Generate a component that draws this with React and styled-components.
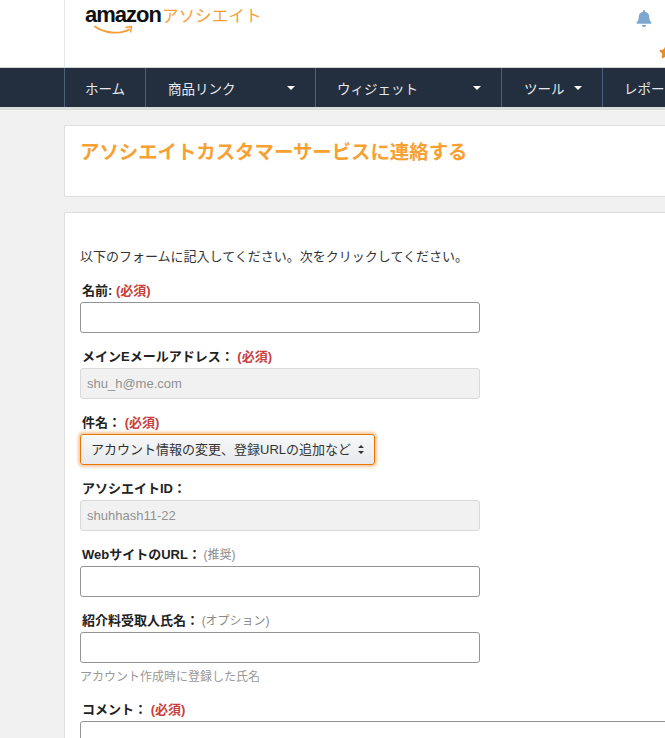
import React from 'react';
import styled, { createGlobalStyle } from 'styled-components';
import { FaBell, FaStar } from 'react-icons/fa';

const GlobalStyle = createGlobalStyle`
    html, body {
        margin: 0;
        padding: 0;
        height: 100%;
        overflow: hidden;
        background-color: #f1f1f1;
        font-family: "Liberation Sans", "Noto Sans CJK JP", sans-serif;
        color: #222;
    }
`;

const Page = styled.div`
    width: 665px;
    height: 738px;
    overflow: hidden;
`;

const Header = styled.header`
    height: 67px;
    display: flex;
    background-color: #fff;
    border-bottom: solid 1px #cfd4d9;
`;

const LogoCell = styled.div`
    margin-left: 64px;
    padding: 1px 0 0 20px;
    border-left: solid 1px #e7e7e7;
`;

const Logo = styled.div`
    position: relative;
    display: flex;
    align-items: baseline;
    height: 32px;
`;

const LogoWord = styled.span`
    font-size: 22px;
    font-weight: 700;
    letter-spacing: -1px;
    color: #111;
    line-height: 28px;
    margin-right: 1px;
`;

const LogoSuffix = styled.span`
    font-size: 16.6px;
    font-weight: 400;
    line-height: 28px;
    color: #f79f3c;
`;

const Smile = styled.svg`
    position: absolute;
    left: 9px;
    top: 24px;
`;

const Actions = styled.div`
    margin-left: auto;
    width: 29px;
    overflow: hidden;
    display: flex;
    flex-direction: column;
    padding-top: 10px;
`;

const Bell = styled(FaBell)`
    width: 16px;
    height: 17px;
    color: #7fa8d1;
`;

const Star = styled(FaStar)`
    flex: none;
    width: 14px;
    height: 14px;
    margin: 18px 0 0 23px;
    color: #e98a2b;
`;

const Nav = styled.nav`
    height: 39px;
    padding-left: 64px;
    display: flex;
    background-color: #232f3e;
    border-bottom: solid 3px #dcdcdc;
`;

const NavItem = styled.a`
    flex: none;
    box-sizing: border-box;
    width: ${(props) => props.$width}px;
    padding: 0 20px 0 ${(props) => props.$left}px;
    display: flex;
    align-items: center;
    justify-content: space-between;
    border-left: solid 1px #4d6079;
    font-size: 13.5px;
    color: #e6e8ea;
    white-space: nowrap;
`;

const Caret = styled.span`
    width: 0;
    height: 0;
    border-left: solid 4px transparent;
    border-right: solid 4px transparent;
    border-top: solid 4px #fff;
`;

const Card = styled.section`
    box-sizing: border-box;
    width: 640px;
    margin-left: 64px;
    background-color: #fff;
    border: solid 1px #dedede;
    border-right: none;
    border-radius: 2px 0 0 2px;
`;

const TitleCard = styled(Card)`
    height: 72px;
    margin-top: 15px;
    margin-bottom: 15px;
    padding: 12px 15px;
`;

const Title = styled.h1`
    margin: 0;
    font-size: 19.4px;
    font-weight: 700;
    line-height: 28px;
    color: #f7a133;
    white-space: nowrap;
`;

const FormCard = styled(Card)`
    padding: 35px 15px 0;
    height: 600px;
`;

const Intro = styled.p`
    margin: 0 0 15px;
    font-size: 13px;
    line-height: 18px;
    color: #333;
`;

const Field = styled.div`
    margin-bottom: 14px;
`;

const Label = styled.label`
    display: block;
    padding-left: 2px;
    height: 18px;
    margin-bottom: 3px;
    font-size: 13px;
    font-weight: 700;
    line-height: 20px;
    color: #222;
`;

const Required = styled.span`
    color: #c9403c;
`;

const Optional = styled.span`
    margin-left: -1px;
    font-size: 12px;
    font-weight: 400;
    color: #8a8a8a;
`;

const Input = styled.input`
    display: block;
    box-sizing: border-box;
    width: ${(props) => props.$width || 400}px;
    height: 31px;
    padding: 0 6px;
    font-family: inherit;
    font-size: 13px;
    color: #222;
    background-color: #fff;
    border: solid 1px #949494;
    border-radius: 3px;
    outline: none;

    &:disabled {
        background-color: #f1f1f1;
        border-color: #dadada;
        color: #919191;
        -webkit-text-fill-color: #919191;
        opacity: 1;
    }
`;

const SelectBox = styled.div`
    position: relative;
    width: 295px;
    height: 31px;
`;

const Select = styled.select`
    appearance: none;
    box-sizing: border-box;
    width: 100%;
    height: 100%;
    padding: 0 0 0 10px;
    font-family: inherit;
    font-size: 13px;
    color: #333;
    background: linear-gradient(to bottom, #f7f8fa, #e7e9ec);
    border: solid 1px #e77600;
    border-radius: 3px;
    box-shadow: 0 0 3px 2px rgba(228, 121, 17, 0.4);
    outline: none;
`;

const SelectArrows = styled.svg`
    position: absolute;
    right: 11px;
    top: 11px;
    pointer-events: none;
`;

const Hint = styled.div`
    margin-top: 6px;
    height: 17px;
    font-size: 12px;
    line-height: 17px;
    color: #999;
`;

const NAV_ITEMS = [
    { label: 'ホーム', width: 81, left: 20 },
    { label: '商品リンク', width: 170, left: 22, caret: true },
    { label: 'ウィジェット', width: 186, left: 21, caret: true },
    { label: 'ツール', width: 101, left: 22, caret: true },
    { label: 'レポート', width: 120, left: 21 },
];

function App() {
    return (
        <Page>
            <GlobalStyle />
            <Header>
                <LogoCell>
                    <Logo>
                        <LogoWord>amazon</LogoWord>
                        <LogoSuffix>アソシエイト</LogoSuffix>
                        <Smile width="42" height="11" viewBox="0 0 42 11">
                            <path d="M1 1.5C10 8 25 10 35 4.5" fill="none" stroke="#f79c34" strokeWidth="1.8" strokeLinecap="round" />
                            <path d="M31.5 2.5L37.5 1.5L36.5 7.5" fill="none" stroke="#f79c34" strokeWidth="1.5" strokeLinejoin="round" />
                        </Smile>
                    </Logo>
                </LogoCell>
                <Actions>
                    <Bell />
                    <Star />
                </Actions>
            </Header>
            <Nav>
                {NAV_ITEMS.map((item) => (
                    <NavItem key={item.label} $width={item.width} $left={item.left}>
                        {item.label}
                        {item.caret && <Caret />}
                    </NavItem>
                ))}
            </Nav>
            <TitleCard>
                <Title>アソシエイトカスタマーサービスに連絡する</Title>
            </TitleCard>
            <FormCard>
                <Intro>以下のフォームに記入してください。次をクリックしてください。</Intro>
                <Field>
                    <Label>名前: <Required>(必須)</Required></Label>
                    <Input />
                </Field>
                <Field>
                    <Label>メインEメールアドレス： <Required>(必須)</Required></Label>
                    <Input disabled value="shu_h@me.com" />
                </Field>
                <Field>
                    <Label>件名： <Required>(必須)</Required></Label>
                    <SelectBox>
                        <Select defaultValue="account">
                            <option value="account">アカウント情報の変更、登録URLの追加など</option>
                        </Select>
                        <SelectArrows width="6" height="9" viewBox="0 0 6 9">
                            <path d="M3 0L6 3H0ZM3 9L0 6H6Z" fill="#333" />
                        </SelectArrows>
                    </SelectBox>
                </Field>
                <Field>
                    <Label>アソシエイトID：</Label>
                    <Input disabled value="shuhhash11-22" />
                </Field>
                <Field>
                    <Label>WebサイトのURL： <Optional>(推奨)</Optional></Label>
                    <Input />
                </Field>
                <Field>
                    <Label>紹介料受取人氏名： <Optional>(オプション)</Optional></Label>
                    <Input />
                    <Hint>アカウント作成時に登録した氏名</Hint>
                </Field>
                <Field>
                    <Label>コメント： <Required>(必須)</Required></Label>
                    <Input $width={600} />
                </Field>
            </FormCard>
        </Page>
    );
}

export default App;
